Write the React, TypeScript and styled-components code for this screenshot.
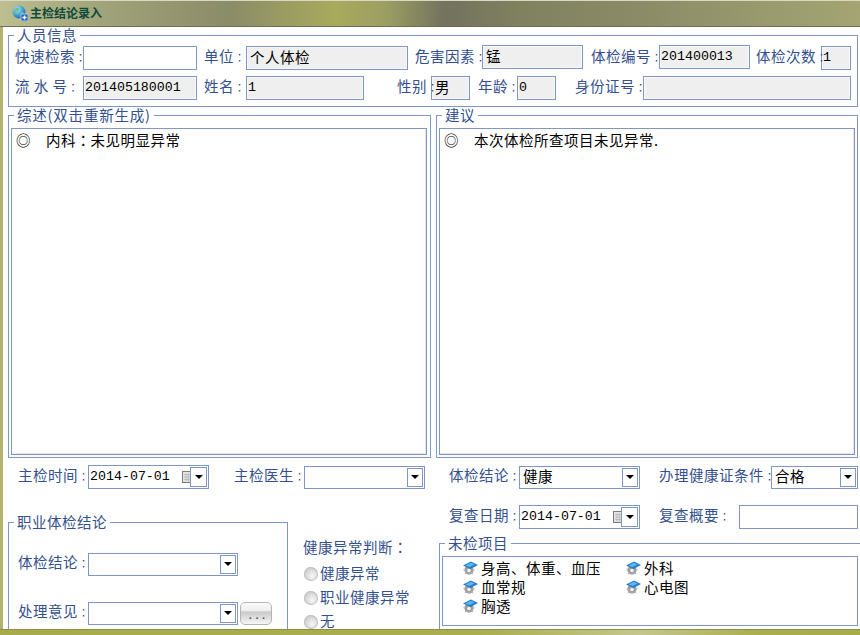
import React from 'react'
import styled, { createGlobalStyle } from 'styled-components'

const GlobalStyle = createGlobalStyle`
  html, body {
    margin: 0;
    padding: 0;
    background: #fff;
    overflow: hidden;
  }
`

const LINE = '#7f97c6'
const INK = '#34508e'
const CJK = '"Noto Sans CJK SC", "Liberation Sans", sans-serif'
const FULL_COLON = '\uFF1A'

const Window = styled.div`
  width: 860px;
  height: 635px;
  display: flex;
  flex-direction: column;
  overflow: hidden;
  font-family: ${CJK};
  font-size: 14.5px;
  letter-spacing: 0.5px;
`

const TitleBar = styled.div`
  height: 27px;
  flex: none;
  box-sizing: border-box;
  display: flex;
  align-items: center;
  gap: 2px;
  padding: 0 0 2px 12px;
  border-top: 1px solid #d8d8c4;
  border-bottom: 1px solid #6c6c58;
  background: linear-gradient(
    92deg,
    #bdbf90 0,
    #a3a57b 90px,
    #8b8c68 230px,
    #a8aa5c 335px,
    #9c9f62 385px,
    #72725e 445px,
    #80815f 520px,
    #8b8b67 640px,
    #a4a572 860px
  );
`

const TitleText = styled.span`
  font-size: 12px;
  font-weight: 700;
  letter-spacing: 0;
  color: #0d4a3c;
`

const Client = styled.div`
  flex: 1;
  min-height: 0;
  overflow: hidden;
  background: #fff;
  border-left: 3px solid #b0b46c;
  padding-left: 5px;
`

const BottomBar = styled.div`
  height: 6px;
  flex: none;
  border-top: 1px solid #8d9240;
  box-sizing: border-box;
  background: linear-gradient(90deg, #a6ab4c 0, #a9ae50 480px, #c3c78c 640px, #a9ae50 760px, #a6ab4c 860px);
`

const Group = styled.fieldset<{ $w: number; $h: number }>`
  box-sizing: border-box;
  width: ${({ $w }) => $w}px;
  height: ${({ $h }) => $h}px;
  min-width: 0;
  margin: 0;
  padding: 0;
  flex: none;
  border: 1px solid ${LINE};
`

const GroupTitle = styled.legend<{ $track?: number }>`
  margin-left: 5px;
  padding: 0 3px;
  height: 16px;
  line-height: 15px;
  color: ${INK};
  letter-spacing: ${({ $track }) => $track ?? 0.5}px;
`

const PersonBody = styled.div`
  padding: 3px 0 0 6px;
  display: flex;
  flex-direction: column;
  gap: 6px;
`

const Row = styled.div<{ $ml?: number }>`
  display: flex;
  align-items: center;
  margin-left: ${({ $ml }) => $ml ?? 0}px;
`

const SpacedRow = styled(Row)`
  margin-top: 16px;
`

const LabelBox = styled.label<{ $w: number; $ml?: number }>`
  flex: none;
  width: ${({ $w }) => $w}px;
  height: 20px;
  margin-left: ${({ $ml }) => $ml ?? 0}px;
  margin-bottom: 4px;
  color: ${INK};
  white-space: nowrap;
  line-height: 20px;
`

const Colon = styled.span`
  font-family: "Noto Sans CJK TC", sans-serif;
  letter-spacing: 0;
`

// label colons sit tight against the input, so a smaller cell is used
const TightColon = styled(Colon)`
  position: relative;
  z-index: 1;
  font-size: 11px;
  line-height: 0;
  letter-spacing: -4px;
`

const Field = styled.div<{ $w: number; $h?: number; $grey?: boolean; $ml?: number; $raised?: boolean }>`
  box-sizing: border-box;
  flex: none;
  width: ${({ $w }) => $w}px;
  height: ${({ $h }) => $h ?? 24}px;
  margin-left: ${({ $ml }) => $ml ?? 0}px;
  padding: 0 0 0 3px;
  border: 1px solid ${LINE};
  background: ${({ $grey }) => ($grey ? '#efefef' : '#fff')};
  box-shadow: ${({ $grey }) => ($grey ? 'inset 0 0 0 1px #f8f8f8' : 'none')};
  color: #000;
  display: flex;
  align-items: center;
  white-space: nowrap;
  overflow: hidden;
  transform: ${({ $raised }) => ($raised ? 'translateY(-1px)' : 'none')};
`

const FieldText = styled.span`
  margin-bottom: 4px;
`

const Mono = styled.span`
  font-family: "Liberation Mono", monospace;
  font-size: 13.3px;
  letter-spacing: 0;
  margin: 0 0 2px -2px;
`

const Pair = styled.div`
  display: flex;
  gap: 5px;
`

const Panel = styled.div<{ $h: number }>`
  box-sizing: border-box;
  width: 416px;
  height: ${({ $h }) => $h}px;
  margin-left: 2px;
  border: 1px solid ${LINE};
  background: #fff;
`

const NotePanel = styled(Panel)`
  margin-top: 5px;
  box-shadow: inset -1px -1px 0 #e6e6e6;
  padding: 1px 0 0 4px;
  display: flex;
  color: #000;
  line-height: 20px;
`

const Bullet = styled.span`
  width: 30px;
  flex: none;
`

const Lower = styled.div`
  display: flex;
  gap: 8px;
  padding-top: 7px;
`

const LeftSide = styled.div`
  width: 423px;
  flex: none;
`

const RightSide = styled.div`
  flex: none;
  width: 425px;
`

const ResultArea = styled.div`
  display: flex;
  margin-top: 25px;
`

const ResultBody = styled.div`
  padding: 22px 0 0 9px;
  display: flex;
  flex-direction: column;
  gap: 25px;
`

const Judge = styled.div`
  margin: 25px 0 0 15px;
`

const JudgeTitle = styled.div`
  color: ${INK};
  height: 16px;
  line-height: 16px;
  margin-bottom: 7px;
`

const RadioRow = styled.div`
  height: 24px;
  box-sizing: border-box;
  padding-bottom: 4px;
  display: flex;
  align-items: center;
  gap: 2px;
  margin-left: 1px;
  color: ${INK};
`

const RadioDot = styled.span`
  width: 14px;
  height: 14px;
  flex: none;
  margin-top: 4px;
  border-radius: 50%;
  background: radial-gradient(circle at 60% 65%, #f6f6f6 0, #dcdcdc 45%, #b4b4b4 100%);
  box-shadow: inset 0 0 0 1px #c6c6c6;
`

const DropButton = styled.span`
  box-sizing: border-box;
  flex: none;
  width: 16px;
  height: 19px;
  margin: 0 1px 0 auto;
  border: 1px solid ${LINE};
  background: #fff;
  display: flex;
  align-items: center;
  justify-content: center;
  &::before {
    content: '';
    border-style: solid;
    border-width: 4px 4px 0;
    border-color: #000 transparent transparent;
  }
`

const DateDrop = styled(DropButton)`
  width: 17px;
  height: 20px;
  margin-left: -2px;
`

const CalendarSvg = styled.svg`
  flex: none;
  margin-left: auto;
`

const ItemSvg = styled.svg`
  flex: none;
`

const MoreButton = styled.button`
  box-sizing: border-box;
  width: 32px;
  height: 23px;
  margin-left: 2px;
  padding: 5px 0 0 2px;
  border: 1px solid #b4b4b4;
  border-radius: 5px;
  background: linear-gradient(180deg, #fbfbfb 0, #eeeeee 38%, #c9c9c9 42%, #e2e2e2 75%, #f6f6f6 100%);
  color: #555;
  font-family: "Liberation Mono", monospace;
  font-size: 11px;
  font-weight: 700;
  line-height: 14px;
  letter-spacing: 0;
`

const PendingGroup = styled(Group)`
  margin-top: 6px;
`

const PendingPanel = styled(Panel)`
  margin-top: 5px;
  padding: 1px 0 0 19px;
  display: grid;
  grid-template-columns: 163px 1fr;
  grid-auto-rows: 19px;
  color: #000;
`

const PendingItem = styled.div`
  display: flex;
  align-items: center;
  gap: 3px;
  white-space: nowrap;
  line-height: 19px;
`

const Lb = ({ w, ml, text }: { w: number; ml?: number; text: string }) => (
  <LabelBox $w={w} $ml={ml}>
    {text}
    <TightColon>{FULL_COLON}</TightColon>
  </LabelBox>
)

const GlobeIcon = () => (
  <svg width="16" height="16" viewBox="0 0 16 16">
    <defs>
      <radialGradient id="globe" cx="35%" cy="30%" r="80%">
        <stop offset="0" stopColor="#bfeaf8" />
        <stop offset="0.55" stopColor="#3f9fd8" />
        <stop offset="1" stopColor="#1a5fa8" />
      </radialGradient>
    </defs>
    <circle cx="7" cy="7" r="6.5" fill="url(#globe)" />
    <path d="M3 3.5l3-1 1.5 1.5-1 2-2 .5-.5 2.5-2-2zM8 8l3-1 1 2-2.5 3z" fill="#6fc08a" />
    <rect x="9" y="9" width="7" height="7" rx="1" fill="#1e63c8" stroke="#e8f0ff" strokeWidth="0.6" />
    <path d="M12.5 10.5v4M10.5 12.5h4" stroke="#fff" strokeWidth="1.4" />
  </svg>
)

const CalendarIcon = () => (
  <CalendarSvg width="10" height="12" viewBox="0 0 10 12">
    <rect x="0.5" y="0.5" width="9" height="11" fill="#e4e4e4" stroke="#7d7d7d" />
    <path d="M2 3.5h7M2 6h7M2 8.5h7M4 2.5v8M6.5 2.5v8" stroke="#b2b2b2" strokeWidth="0.7" />
  </CalendarSvg>
)

const PendingIcon = () => (
  <ItemSvg width="16" height="15" viewBox="0 0 16 15">
    <circle cx="7" cy="10" r="4.6" fill="#9c9c9c" />
    <circle cx="7" cy="10.5" r="1.8" fill="#f4f4f4" />
    <path d="M1.5 9.5l2 .5M12.5 9.5l-2 .5M3 14l1.5-1.5M11 14l-1.5-1.5M7 15v-2" stroke="#b8b8b8" strokeWidth="1.3" />
    <path d="M1 5.5L9 1.5 16 5l-7.5 4z" fill="#1f7fcf" />
    <path d="M3.5 5.4L9 2.7l3.5 1.9L7.5 7z" fill="#63b6ea" />
  </ItemSvg>
)

const DateBox = ({ value, w }: { value: string; w: number }) => (
  <Field $w={w}>
    <Mono>{value}</Mono>
    <CalendarIcon />
    <DateDrop />
  </Field>
)

const Combo = ({ value, w, h = 23 }: { value?: string; w: number; h?: number }) => (
  <Field $w={w} $h={h}>
    {value && <FieldText>{value}</FieldText>}
    <DropButton />
  </Field>
)

export default function App() {
  return (
    <Window>
      <GlobalStyle />
      <TitleBar>
        <GlobeIcon />
        <TitleText>主检结论录入</TitleText>
      </TitleBar>
      <Client>
        <Group $w={850} $h={80}>
          <GroupTitle>人员信息</GroupTitle>
          <PersonBody>
            <Row>
              <Lb w={68} text="快速检索" />
              <Field $w={114} />
              <Lb w={42} ml={7} text="单位" />
              <Field $w={162} $grey><FieldText>个人体检</FieldText></Field>
              <Lb w={67} ml={7} text="危害因素" />
              <Field $w={101} $grey $raised><FieldText>锰</FieldText></Field>
              <Lb w={68} ml={8} text="体检编号" />
              <Field $w={91} $grey $raised><Mono>201400013</Mono></Field>
              <Lb w={65} ml={6} text="体检次数" />
              <Field $w={30} $grey><Mono>1</Mono></Field>
            </Row>
            <Row>
              <Lb w={68} text="流 水 号" />
              <Field $w={114} $grey><Mono>201405180001</Mono></Field>
              <Lb w={42} ml={7} text="姓名" />
              <Field $w={118} $grey><Mono>1</Mono></Field>
              <Lb w={34} ml={33} text="性别" />
              <Field $w={39} $grey><FieldText>男</FieldText></Field>
              <Lb w={39} ml={8} text="年龄" />
              <Field $w={39} $grey><Mono>0</Mono></Field>
              <Lb w={68} ml={19} text="身份证号" />
              <Field $w={208} $grey />
            </Row>
          </PersonBody>
        </Group>
        <Pair>
          <Group $w={423} $h={351}>
            <GroupTitle $track={0.8}>综述(双击重新生成)</GroupTitle>
            <NotePanel $h={327}>
              <Bullet>◎</Bullet>
              内科<Colon>{FULL_COLON}</Colon>未见明显异常
            </NotePanel>
          </Group>
          <Group $w={422} $h={351}>
            <GroupTitle>建议</GroupTitle>
            <NotePanel $h={327}>
              <Bullet>◎</Bullet>
              本次体检所查项目未见异常.
            </NotePanel>
          </Group>
        </Pair>
        <Lower>
          <LeftSide>
            <Row $ml={10}>
              <Lb w={70} text="主检时间" />
              <DateBox value="2014-07-01" w={121} />
              <Lb w={70} ml={25} text="主检医生" />
              <Combo w={121} />
            </Row>
            <ResultArea>
              <Group $w={280} $h={130}>
                <GroupTitle>职业体检结论</GroupTitle>
                <ResultBody>
                  <Row>
                    <Lb w={70} text="体检结论" />
                    <Combo w={150} />
                  </Row>
                  <Row>
                    <Lb w={70} text="处理意见" />
                    <Combo w={150} />
                    <MoreButton>...</MoreButton>
                  </Row>
                </ResultBody>
              </Group>
              <Judge>
                <JudgeTitle>健康异常判断<Colon>{FULL_COLON}</Colon></JudgeTitle>
                <RadioRow><RadioDot />健康异常</RadioRow>
                <RadioRow><RadioDot />职业健康异常</RadioRow>
                <RadioRow><RadioDot />无</RadioRow>
              </Judge>
            </ResultArea>
          </LeftSide>
          <RightSide>
            <Row $ml={10}>
              <Lb w={70} text="体检结论" />
              <Combo value="健康" w={121} />
              <Lb w={112} ml={19} text="办理健康证条件" />
              <Combo value="合格" w={87} />
            </Row>
            <SpacedRow $ml={10}>
              <Lb w={70} text="复查日期" />
              <DateBox value="2014-07-01" w={121} />
              <Lb w={80} ml={19} text="复查概要" />
              <Field $w={119} />
            </SpacedRow>
            <PendingGroup $w={425} $h={110}>
              <GroupTitle>未检项目</GroupTitle>
              <PendingPanel $h={70}>
                <PendingItem><PendingIcon />身高、体重、血压</PendingItem>
                <PendingItem><PendingIcon />外科</PendingItem>
                <PendingItem><PendingIcon />血常规</PendingItem>
                <PendingItem><PendingIcon />心电图</PendingItem>
                <PendingItem><PendingIcon />胸透</PendingItem>
              </PendingPanel>
            </PendingGroup>
          </RightSide>
        </Lower>
      </Client>
      <BottomBar />
    </Window>
  )
}
